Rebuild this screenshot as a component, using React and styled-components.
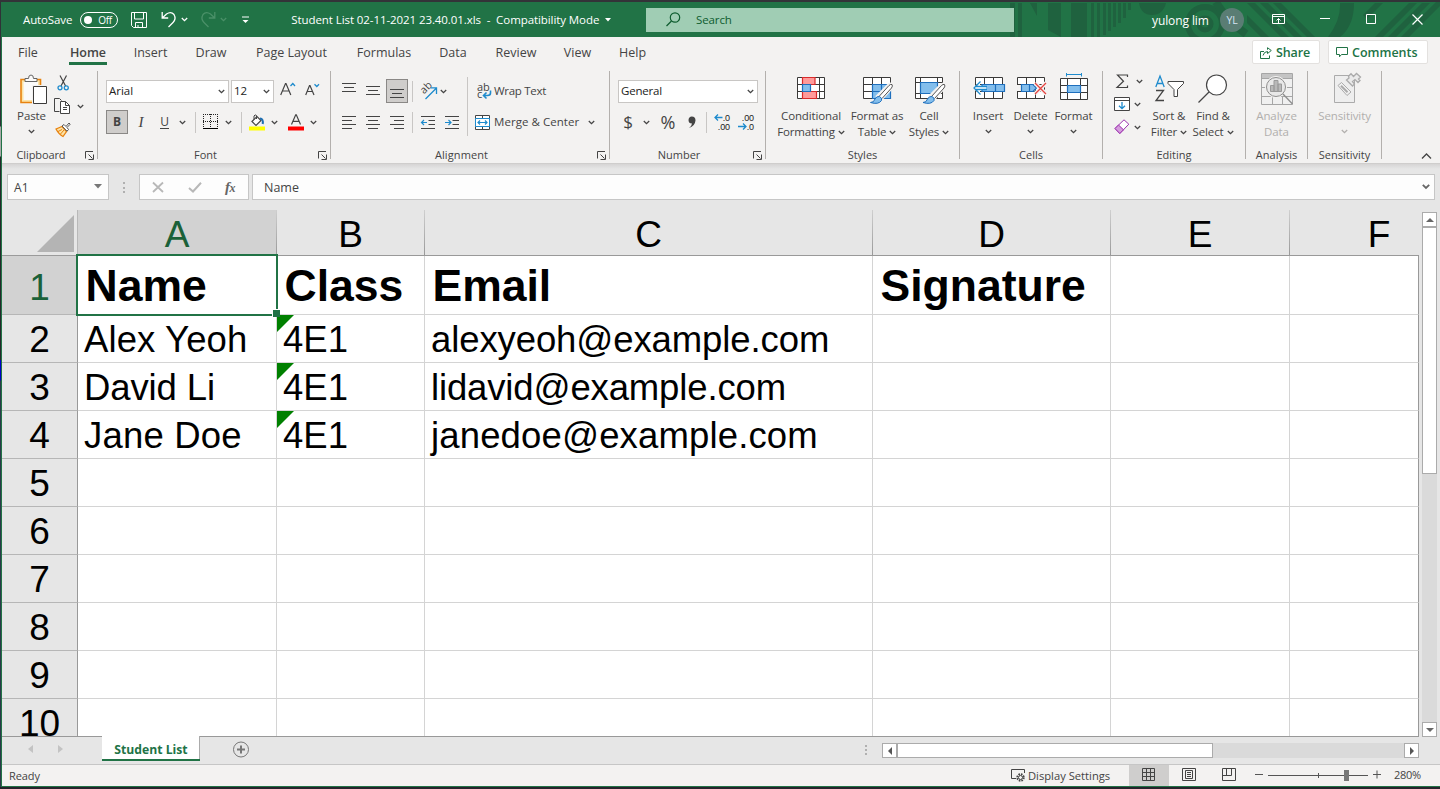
import React from "react";
import styled, { createGlobalStyle } from "styled-components";

const Global = createGlobalStyle`
  * { box-sizing: border-box; }
  body { margin: 0; background: #2b2b2d; font-family: "Open Sans", "Noto Sans", sans-serif; overflow: hidden; }
  svg { display: block; flex: none; overflow: visible; }
`;

const GREEN = "#217346";
const INK = "#444444";
const BLUE = "#1e8bcd";

const Desktop = styled.div`
  width: 1440px;
  height: 789px;
  padding: 2px 0 2px 1px;
  background: linear-gradient(to bottom, #2f3237 0 126px, #a9a9a9 127px 156px, #26282b 157px 360px, #0000c8 360px 380px, #2c3a4a 381px 100%);
  box-shadow: inset 0 2px #333338, inset 0 -2px #24242b;
`;
const Window = styled.div`
  height: 785px;
  border-left: 1px solid ${GREEN};
  border-bottom: 1px solid ${GREEN};
  background: #f3f2f1;
  display: flex;
  flex-direction: column;
`;
const Text = styled.span`
  flex: none;
  white-space: pre;
  font-size: ${(p) => p.$size || 12}px;
  line-height: 16px;
  letter-spacing: ${(p) => p.$track || 0}px;
  font-weight: ${(p) => p.$weight || 400};
  color: ${(p) => p.$color || INK};
  margin-left: ${(p) => p.$ml || 0}px;
  margin-top: ${(p) => p.$mt || 0}px;
`;
const Icon = styled.svg.attrs((p) => ({
  width: p.$w,
  height: p.$h,
  viewBox: `0 0 ${p.$w} ${p.$h}`,
  fill: "none",
  stroke: p.$stroke || INK,
}))`
  margin-left: ${(p) => p.$ml || 0}px;
  margin-top: ${(p) => p.$mt || 0}px;
`;
const Letter = styled.text`
  font-family: "Open Sans", sans-serif;
  font-size: ${(p) => p.$size}px;
  fill: ${(p) => p.$color || INK};
  stroke: none;
`;

const Chevron = ({ ml, mt, color = INK }) => (
  <Icon $w={7} $h={5} $ml={ml} $mt={mt} $stroke={color}>
    <path d="M.8 1 3.5 3.6 6.2 1" strokeWidth="1.3" />
  </Icon>
);

/* ---------- title bar ---------- */
const TitleBar = styled.header`
  position: relative;
  flex: none;
  height: 35px;
  background: ${GREEN};
  display: flex;
  align-items: center;
`;
const TitleArt = styled.svg`
  position: absolute;
  right: 0;
  top: 0;
  overflow: hidden;
`;
const Toggle = styled.div`
  width: 38px;
  height: 16px;
  margin-left: 8px;
  border: 1px solid #fff;
  border-radius: 8px;
  display: flex;
  align-items: center;
  padding-left: 3px;
  flex: none;
`;
const Knob = styled.i`
  width: 8px;
  height: 8px;
  border-radius: 50%;
  background: #fff;
`;
const SearchBox = styled.div`
  width: 368px;
  height: 24px;
  background: #a0cdb4;
  display: flex;
  align-items: center;
  flex: none;
  z-index: 1;
`;
const TitleLeft = styled.div`
  width: 644px;
  display: flex;
  align-items: center;
  padding-left: 21px;
`;
const TitleRight = styled.div`
  flex: 1;
  display: flex;
  align-items: center;
  padding-left: 138px;
  z-index: 1;
`;
const TitleName = styled.div`
  width: 57px;
  display: flex;
`;
const Avatar = styled.div`
  width: 24px;
  height: 24px;
  margin-left: 11px;
  border-radius: 50%;
  background: #5a7d74;
  color: #d5e4f4;
  font-size: 10.5px;
  letter-spacing: -0.2px;
  display: flex;
  align-items: center;
  justify-content: center;
`;

/* ---------- ribbon ---------- */
const TabRow = styled.nav`
  flex: none;
  height: 30px;
  display: flex;
`;
const Tab = styled.div`
  width: ${(p) => p.$w}px;
  margin-left: ${(p) => p.$ml}px;
  height: 28px;
  display: flex;
  justify-content: center;
  padding-top: 8px;
  border-bottom: 3px solid ${(p) => (p.$on ? GREEN : "transparent")};
  flex: none;
`;
const TabButton = styled.div`
  width: ${(p) => p.$w}px;
  height: 24px;
  margin: 3px 0 0 ${(p) => p.$ml}px;
  background: #fff;
  border: 1px solid #e3e1df;
  border-radius: 2px;
  display: flex;
  align-items: center;
  padding: 1px 0 0 7px;
  flex: none;
`;
const TabEnd = styled.i`
  width: 12px;
`;
const Ribbon = styled.section`
  flex: none;
  height: 96px;
  display: flex;
  padding-top: 4px;
`;
const Group = styled.div`
  width: ${(p) => p.$w}px;
  height: 88px;
  flex: none;
  border-right: 1px solid #b3b0ad;
  display: flex;
  flex-direction: column;
`;
const GroupBody = styled.div`
  height: 75px;
  display: flex;
  padding-left: ${(p) => p.$pl || 0}px;
  flex: none;
`;
const GroupFoot = styled.div`
  display: flex;
  height: 16px;
  align-items: center;
  margin-top: 1px;
`;
const GroupName = styled.div`
  flex: 1;
  display: flex;
  justify-content: center;
`;
const LauncherSlot = styled.div`
  width: 12px;
  margin-left: 5px;
`;
const Stack = styled.div`
  display: flex;
  flex-direction: column;
  width: ${(p) => (p.$w ? p.$w + "px" : "auto")};
  align-items: ${(p) => (p.$center ? "center" : "flex-start")};
  margin-left: ${(p) => p.$ml || 0}px;
  flex: none;
`;
const Line = styled.div`
  display: flex;
  align-items: center;
  height: ${(p) => p.$h || 24}px;
  margin-top: ${(p) => p.$mt || 0}px;
  margin-left: ${(p) => p.$ml || 0}px;
`;
const Combo = styled.div`
  width: ${(p) => p.$w}px;
  height: 23px;
  margin-left: ${(p) => p.$ml || 0}px;
  border: 1px solid #c8c6c4;
  background: #fff;
  display: flex;
  align-items: center;
  justify-content: space-between;
  padding: 0 3px 0 2px;
  flex: none;
`;
const Pressed = styled.div`
  width: 22px;
  height: 24px;
  margin-left: ${(p) => p.$ml || 0}px;
  background: #cfcdcb;
  border: 1px solid #8a8886;
  display: flex;
  align-items: center;
  justify-content: center;
  flex: none;
`;
const Divider = styled.i`
  width: 1px;
  height: ${(p) => p.$h || 21}px;
  background: #c8c6c4;
  margin-left: ${(p) => p.$ml || 0}px;
  margin-top: ${(p) => p.$mt || 0}px;
  flex: none;
`;
const IconSlot = styled.div`
  height: 37px;
  padding: ${(p) => p.$top || 0}px 0 0 ${(p) => p.$left || 0}px;
  display: flex;
  align-items: flex-start;
  flex: none;
`;
const Caption = styled.div`
  display: flex;
  align-items: center;
  height: 16px;
  gap: 3px;
`;
const ItalicI = styled.span`
  width: 12px;
  margin-left: 7px;
  text-align: center;
  font: italic 15px/16px "Liberation Serif", serif;
  color: ${INK};
`;
const Underlined = styled.span`
  width: 9px;
  margin-left: 13px;
  text-align: center;
  font-size: 12px;
  line-height: 13px;
  color: ${INK};
  border-bottom: 1px solid ${INK};
`;
const Glyph = styled.span`
  width: ${(p) => p.$w}px;
  margin-left: ${(p) => p.$ml || 0}px;
  font-size: ${(p) => p.$size}px;
  line-height: 20px;
  text-align: center;
  color: ${INK};
`;

const Launcher = () => (
  <Icon $w={9} $h={9}>
    <path d="M.5 7.5V.5H8M3.5 3.5 7.5 7.5M8.5 3.5V8.5H3.5" />
  </Icon>
);
const RibbonGroup = ({ name, w, pl, launcher, track = 0, children }) => (
  <Group $w={w}>
    <GroupBody $pl={pl}>{children}</GroupBody>
    <GroupFoot>
      <GroupName>
        <Text $size={11} $track={track}>{name}</Text>
      </GroupName>
      {launcher && <LauncherSlot><Launcher /></LauncherSlot>}
    </GroupFoot>
  </Group>
);
const BigButton = ({ w, ml, top, left, icon, lines, track = -0.1, chevron, color }) => (
  <Stack $w={w} $ml={ml} $center>
    <IconSlot $top={top} $left={left}>{icon}</IconSlot>
    {lines.map((l, i) => (
      <Caption key={l}>
        <Text $size={11.5} $track={track} $color={color}>{l}</Text>
        {chevron === "inline" && i === lines.length - 1 && <Chevron />}
      </Caption>
    ))}
    {chevron === "below" && <Chevron mt={5} color={color} />}
  </Stack>
);

const Lines = ({ rows, ml, mt }) => (
  <Icon $w={14} $h={13} $ml={ml} $mt={mt}>
    {rows.map(([a, b, y], i) => (
      <path key={i} d={`M${a} ${y}.5H${b}`} />
    ))}
  </Icon>
);

const PasteIcon = () => (
  <Icon $w={28} $h={31}>
    <path d="M1 5.5H20.5V28.5H1Z" fill="#fce3a6" stroke="#e8820e" strokeWidth="1.6" />
    <path d="M3.5 8H18V26H3.5Z" fill="#fafafa" stroke="none" />
    <path d="M5 7.5V4.5H8.5Q8.5 1 11 1T13.5 4.5H17V7.5Z" fill="#fafafa" stroke="#666" />
    <path d="M12 11H28V31H12Z" fill="#f3f2f1" stroke="none" />
    <path d="M13.5 12.5H26.5V29.5H13.5Z" fill="#fff" stroke="#3b3a39" />
  </Icon>
);
const CutIcon = () => (
  <Icon $w={13} $h={16} $ml={3}>
    <path d="M3 .5 8.6 11M9.5 .5 4 11" strokeWidth="1.2" />
    <circle cx="3" cy="12.8" r="2" stroke={BLUE} strokeWidth="1.3" />
    <circle cx="9.3" cy="12.8" r="2" stroke={BLUE} strokeWidth="1.3" />
  </Icon>
);
const CopyIcon = () => (
  <Icon $w={17} $h={17} $ml={0} $mt={-1}>
    <path d="M5.5 13.5H.5V.5H5.5L7.5 2.5" />
    <path d="M6.5 3.5H11.5L15.5 7.5V15.5H6.5Z" fill="#fff" />
    <path d="M11.5 3.5V7.5H15.5M9 9.5H13M9 11.5H13" />
  </Icon>
);
const PainterIcon = () => (
  <Icon $w={16} $h={16} $ml={1} $mt={-3}>
    <path d="M1 7 7 4.5 11.5 9.5 8 14.5Q4 12.5 1 7Z" fill="#fce3a6" stroke="#e8820e" strokeWidth="1.3" />
    <path d="M3 9.5 7 7.5M5.5 12 9 8" stroke="#e8820e" />
    <path d="M7 4 9 2.5 11 4.5 14 1 15.2 2.2 12 5.5 13.5 7.5 12 9.2Z" fill="#fff" stroke="#555" />
  </Icon>
);
const BorderIcon = ({ ml }) => (
  <Icon $w={16} $h={16} $ml={ml}>
    <path d="M0 .5H15M0 7.5H15M.5 0V13M7.5 0V13M14.5 0V13" stroke="#222" strokeDasharray="1 1" shapeRendering="crispEdges" />
    <path d="M0 14.5H15" stroke="#000" />
  </Icon>
);
const FillIcon = ({ ml }) => (
  <Icon $w={16} $h={17} $ml={ml}>
    <path d="M3 7.5 8 2.5 12 6.5 7 11.5Z" fill="#fff" strokeWidth="1.2" />
    <path d="M5 5.5V2Q6 0 7.5 1.5V5" />
    <path d="M11 4.5Q14.5 4.5 13.7 10" stroke="#1f6fb2" strokeWidth="2" />
    <path d="M0 14.5H16" stroke="#ffff00" strokeWidth="4" />
  </Icon>
);
const FontColorIcon = ({ ml }) => (
  <Icon $w={16} $h={17} $ml={ml}>
    <path d="M3.5 10.5 7.7 .8H8.3L12.5 10.5M5 7.3H11" strokeWidth="1.2" />
    <path d="M0 14.5H16" stroke="#ff0000" strokeWidth="4" />
  </Icon>
);
const OrientIcon = ({ ml }) => (
  <Icon $w={18} $h={17} $ml={ml}>
    <Letter $size={10.5} x="0" y="0" transform="translate(4 11.5) rotate(-45)">ab</Letter>
    <path d="M5.5 16 16 5.5M10.5 4.8H16.5V11" stroke={BLUE} strokeWidth="1.3" />
  </Icon>
);
const WrapIcon = () => (
  <Icon $w={15} $h={17}>
    <Letter $size={11} x="0" y="8.3">ab</Letter>
    <Letter $size={11} x="0" y="15.3">c</Letter>
    <path d="M13.5 7.5V10Q13.5 12.5 10.5 12.5H6.5M9.5 9.5 6.5 12.5 9.5 15.5" stroke={BLUE} strokeWidth="1.6" />
  </Icon>
);
const MergeIcon = () => (
  <Icon $w={16} $h={15}>
    <path d="M.5 .5H14.5V14.5H.5ZM.5 3.5H14.5M.5 11.5H14.5M7.5 .5V3.5M7.5 11.5V14.5" fill="#fff" />
    <path d="M.5 3.5H14.5V11.5H.5Z" fill="#fff" stroke={BLUE} />
    <path d="M3 7.5H12M5 5.5 3 7.5 5 9.5M10 5.5 12 7.5 10 9.5" stroke={BLUE} strokeWidth="1.2" />
  </Icon>
);
const IndentIcon = ({ ml, right }) => (
  <Icon $w={15} $h={13} $ml={ml}>
    <path d="M0 .5H14M7.5 4.5H14M7.5 8.5H14M0 12.5H14" />
    <path d={right ? "M0 6.5H5.5M3.5 4 6 6.5 3.5 9" : "M1 6.5H6M3 4 .5 6.5 3 9"} stroke={BLUE} strokeWidth="1.2" />
  </Icon>
);
const DecimalBox = styled.div`
  width: 16px;
  height: 17px;
  margin-left: ${(p) => p.$ml}px;
  display: flex;
  flex-direction: column;
  justify-content: space-between;
  flex: none;
  font: 9px/8px "Liberation Sans", sans-serif;
  letter-spacing: -0.1px;
  color: #222;
`;
const DecimalRow = styled.div`
  display: flex;
  justify-content: flex-end;
  align-items: center;
  height: 8px;
`;
const DecArrow = ({ right }) => (
  <Icon $w={9} $h={7}>
    <path d={right ? "M0 3.5H8M5 .5 8 3.5 5 6.5" : "M8.5 3.5H1M4 .5 1 3.5 4 6.5"} stroke={BLUE} strokeWidth="1.3" />
  </Icon>
);

const CondIcon = () => (
  <Icon $w={28} $h={23}>
    <path d="M.5 .5H27.5V21.5H.5ZM.5 7.5H27.5M.5 14.5H27.5M5.5 .5V21.5M22.5 .5V21.5" fill="#fff" stroke="#3b3a39" />
    <path d="M5.5 .5H18V7.5H5.5ZM5.5 14.5H19.5V21.5H5.5Z" fill="#ff9a9a" stroke="#d92b2b" strokeWidth="1.2" />
    <path d="M5.5 7.5H13.5V14.5H5.5Z" fill="#83beec" stroke="#1e6fbd" strokeWidth="1.2" />
  </Icon>
);
const Brush = ({ x }) => (
  <g transform={`translate(${x} 6)`}>
    <path d="M7 13 18.5 1.5Q20.5 .5 21.8 1.5 22.5 3 21 5L11 16Z" fill="#fff" stroke="#f3f2f1" strokeWidth="3" />
    <path d="M8.5 13.5 18.5 2.5Q20 1 21.5 1.5 22.5 3 21 5L11.5 15.5" fill="#fff" stroke="#555" />
    <path d="M0 19.5Q3.5 19.5 4.5 16 6 13 9 13.5 12 15 11 17.5 8 22 0 19.5Z" fill="#83beec" stroke="#1e6fbd" />
  </g>
);
const TableIcon = () => (
  <Icon $w={30} $h={29}>
    <path d="M.5 .5H27.5V21.5H.5ZM.5 7.5H27.5M.5 14.5H27.5M9.5 .5V21.5M18.5 .5V21.5" fill="#fff" stroke="#3b3a39" />
    <path d="M9.5 7.5H27.5V21.5H9.5ZM9.5 14.5H27.5M18.5 7.5V21.5" fill="#83beec" stroke="#1e6fbd" strokeWidth="1.2" />
    <Brush x={7.5} />
  </Icon>
);
const StylesIcon = () => (
  <Icon $w={31} $h={29}>
    <path d="M.5 .5H27.5V21.5H.5ZM.5 5.5H27.5M.5 16.5H27.5M5.5 .5V21.5M22.5 .5V21.5" fill="#fff" stroke="#3b3a39" />
    <path d="M5.5 5.5H22.5V16.5H5.5Z" fill="#83beec" stroke="#1e6fbd" strokeWidth="1.2" />
    <Brush x={8} />
  </Icon>
);
const InsertIcon = () => (
  <Icon $w={33} $h={23}>
    <path d="M2.5 .5H29.5V21.5H2.5ZM2.5 7.5H29.5M2.5 14.5H29.5M11.5 .5V21.5M20.5 .5V21.5" fill="#fff" stroke="#3b3a39" />
    <path d="M9 7.5H31.5V14.5H9ZM22.5 7.5V14.5" fill="#83beec" stroke="#1e6fbd" strokeWidth="1.2" />
    <path d="M0 11 7 4V9.5H13V12.5H7V18Z" fill="#fff" stroke="none" />
    <path d="M7.5 4.5 1 11 7.5 17.5M3 9.5H14M3 12.5H14" stroke={BLUE} strokeWidth="1.3" />
  </Icon>
);
const DeleteIcon = () => (
  <Icon $w={30} $h={23}>
    <path d="M.5 .5H27.5V21.5H.5ZM.5 7.5H27.5M.5 14.5H27.5M9.5 .5V21.5M18.5 .5V21.5" fill="#fff" stroke="#3b3a39" />
    <path d="M0 8H4V14H0Z" fill="#f3f2f1" stroke="none" />
    <path d="M4.5 7.5H16L19.5 11 16 14.5H4.5ZM12.5 7.5V14.5" fill="#83beec" stroke="#1e6fbd" strokeWidth="1.2" />
    <path d="M18 6 29 17M29 6 18 17" stroke="#f3f2f1" strokeWidth="4" />
    <path d="M18 6 29 17M29 6 18 17" stroke="#e8433f" strokeWidth="1.3" />
  </Icon>
);
const FormatIcon = () => (
  <Icon $w={28} $h={28}>
    <path d="M6.5 1.5H21.5M6.5 0V3.5M21.5 0V3.5" stroke={BLUE} />
    <path d="M.5 5.5H27.5V26.5H.5ZM.5 12.5H27.5M.5 19.5H27.5M7.5 5.5V26.5M20.5 5.5V26.5" fill="#fff" stroke="#3b3a39" />
    <path d="M7.5 12.5H20.5V19.5H7.5Z" fill="#83beec" stroke="#1e6fbd" strokeWidth="1.2" />
  </Icon>
);
const SigmaIcon = () => (
  <Icon $w={13} $h={15}>
    <path d="M11.5 3V1H1.5L7.5 7.3 1 13.5H11.5V11.5" strokeWidth="1.2" />
  </Icon>
);
const FillDownIcon = () => (
  <Icon $w={16} $h={15}>
    <path d="M.5 .5H15.5V13.5H.5ZM.5 3.5H15.5" fill="#fff" />
    <path d="M8 5V11.5M5 8.8 8 11.7 11 8.8" stroke={BLUE} strokeWidth="1.3" />
  </Icon>
);
const EraserIcon = () => (
  <Icon $w={16} $h={16} $stroke="#9b2fae">
    <path d="M1 9.5 10 .8 14.8 5.2 5.8 14.5Z" fill="#fff" />
    <path d="M1 9.5 4.5 6 9.5 10.8 5.8 14.5Z" fill="#d59ddd" />
  </Icon>
);
const SortIcon = () => (
  <Icon $w={29} $h={29}>
    <path d="M.8 12 5 1 9.2 12M2.2 8.5H7.8" stroke={BLUE} strokeWidth="1.3" />
    <path d="M1 15.5H8.5L1 25.5H9" strokeWidth="1.3" />
    <path d="M13 6.5H28.5V8.5L22.5 14.5V21.5H19V14.5L13 8.5Z" fill="#fff" />
  </Icon>
);
const FindIcon = () => (
  <Icon $w={30} $h={31}>
    <circle cx="18.5" cy="11" r="10" fill="#fff" strokeWidth="1.2" />
    <path d="M11 18 .5 28.5" strokeWidth="1.3" />
  </Icon>
);
const AnalyzeIcon = () => (
  <Icon $w={32} $h={33} $stroke="#a6a6a6">
    <path d="M.5 .5H31.5V31.5H.5Z" fill="#f0f0f0" />
    <path d="M1 1H31V5H1Z" fill="#c4c4c4" stroke="none" />
    <path d="M.5 5.5H31.5M.5 14.5H31.5M.5 23.5H31.5M11.5 23V31M21.5 23V31" />
    <circle cx="15" cy="14" r="10.5" fill="#f3f2f1" stroke="#f3f2f1" />
    <circle cx="15" cy="14" r="9.5" fill="#e8e8e8" stroke="#8e8e8e" />
    <path d="M22 21 31.5 31" stroke="#8e8e8e" strokeWidth="1.3" />
    <path d="M9.5 12.5H13V18.5H9.5ZM17 11H20.5V18.5H17ZM13 7.5H17V18.5H13Z" fill="#b8b8b8" stroke="#9a9a9a" />
  </Icon>
);
const SensIcon = () => (
  <Icon $w={28} $h={31} $stroke="#ababab">
    <path d="M.5 2.5H20.5V29.5H.5Z" fill="#eeeeee" />
    <path d="M4 12.5 7.5 9.5 17 19 13 22.5Z" fill="#f0f0f0" />
    <path d="M7 12.8 13.5 19.3" strokeWidth="2" />
    <path d="M12.5 7 18.5 13 20.5 11 18.5 8.5 21 6.5 24 9.5 26 7.5 24.5 6 26.5 4 22.5 .5 19.5 3.5 17 .8 14.5 3.2 15 5Z" fill="#eaeaea" strokeWidth="1.3" />
  </Icon>
);

/* ---------- formula bar ---------- */
const FormulaBar = styled.section`
  flex: none;
  height: 47px;
  background: linear-gradient(#c8c6c4 0, #d6d5d5 1px, #e6e6e6 6px);
  display: flex;
  padding: 11px 0 0 5px;
`;
const Field = styled.div`
  height: 26px;
  width: ${(p) => p.$w}px;
  margin-left: ${(p) => p.$ml || 0}px;
  background: #fdfdfd;
  border: 1px solid #c6c6c6;
  display: flex;
  align-items: center;
  flex: none;
`;
const Spring = styled.i`
  flex: 1;
`;
const Dots = styled.div`
  width: 2px;
  height: ${(p) => p.$h || 11}px;
  margin: ${(p) => p.$m};
  display: flex;
  flex-direction: column;
  justify-content: space-between;
  flex: none;
  i { height: 2px; background: #b0b0b0; }
`;
const Fx = styled.span`
  font: italic 700 15px/16px "Liberation Serif", serif;
  color: #666;
  margin-left: 23px;
  letter-spacing: -0.5px;
  small { font-size: 12px; }
`;

/* ---------- sheet ---------- */
const SheetArea = styled.main`
  flex: none;
  height: 526px;
  background: #e6e6e6;
  display: flex;
`;
const Grid = styled.div`
  position: relative;
  width: 1417px;
  height: 526px;
  overflow: hidden;
  display: grid;
  grid-template-columns: 76px 199px 148px 448px 238px 179px 129px;
  grid-template-rows: 46px 59px repeat(9, 48px);
  font-family: "Liberation Sans", Arial, sans-serif;
  font-size: 37px;
  flex: none;
`;
const Corner = styled.div`
  display: flex;
  padding: 5px 3px 0 34px;
  border-bottom: 1px solid #9b9b9b;
  border-right: 1px solid #b8b8b8;
`;
const ColHead = styled.div`
  display: flex;
  justify-content: ${(p) => (p.$last ? "flex-start" : "center")};
  padding: 4px 1px 0 0;
  line-height: 41px;
  overflow: hidden;
  color: ${(p) => (p.$on ? "#1b6139" : "#000")};
  border-bottom: 1px solid #999;
  background: ${(p) => (p.$last ? "" : "linear-gradient(#cfcfcf, #999) right / 1px 100% no-repeat,")} ${(p) => (p.$on ? "#d2d2d2" : "#e6e6e6")};
  span { flex: none; width: ${(p) => (p.$last ? "178px" : "auto")}; text-align: center; }
`;
const RowHead = styled.div`
  display: flex;
  justify-content: center;
  align-items: flex-end;
  padding: 0 0 ${(p) => (p.$on ? 5 : 1)}px 0;
  line-height: 42px;
  color: ${(p) => (p.$on ? "#1b6139" : "#000")};
  border-right: 1px solid #999;
  border-bottom: 1px solid #b6b6b6;
  background: ${(p) => (p.$on ? "#d2d2d2" : "#e6e6e6")};
`;
const Cell = styled.div`
  position: relative;
  background: #fff;
  border-right: 1px solid ${(p) => (p.$last ? "#999" : "#d4d4d4")};
  border-bottom: 1px solid #d4d4d4;
  display: flex;
  align-items: flex-end;
  white-space: pre;
  color: #000;
  padding: 0 0 ${(p) => (p.$bold ? 3 : 1)}px ${(p) => (p.$bold ? 7.5 : 6)}px;
  font-size: ${(p) => (p.$bold ? 44.5 : 36.5)}px;
  line-height: ${(p) => (p.$bold ? 50 : 42)}px;
  font-weight: ${(p) => (p.$bold ? 700 : 400)};
  letter-spacing: ${(p) => p.$track || 0}px;
`;
const ErrorFlag = styled.i`
  position: absolute;
  left: 0;
  top: 0;
  border-top: 17px solid #008000;
  border-right: 17px solid transparent;
`;
const Selection = styled.div`
  position: absolute;
  left: 74px;
  top: 44px;
  width: 202px;
  height: 62px;
  border: 2px solid ${GREEN};
  &::after {
    content: "";
    position: absolute;
    right: -4px;
    bottom: -3px;
    width: 7px;
    height: 7px;
    background: ${GREEN};
    border: solid #fff;
    border-width: 1px 0 0 1px;
  }
`;
const VScroll = styled.div`
  position: relative;
  z-index: 1;
  width: 15px;
  height: 525px;
  margin: 2px 0 0 3px;
  background: #dadada;
  display: flex;
  flex-direction: column;
  justify-content: space-between;
`;
const ScrollPiece = styled.div`
  width: ${(p) => p.$w || 15}px;
  height: ${(p) => p.$h || 15}px;
  background: #fff;
  border: 1px solid #ababab;
  display: flex;
  align-items: center;
  justify-content: center;
  flex: none;
`;

/* ---------- sheet tabs and status ---------- */
const TabsBar = styled.section`
  flex: none;
  height: 28px;
  background: #e6e6e6;
  display: flex;
`;
const TopLine = styled.div`
  border-top: 1px solid #999;
  width: ${(p) => p.$w}px;
  display: flex;
  flex: none;
`;
const SheetTab = styled.div`
  width: 98px;
  height: 25px;
  background: #fff;
  border-bottom: 2px solid ${GREEN};
  box-shadow: inset -1px 0 #ababab;
  display: flex;
  justify-content: center;
  align-items: center;
  padding-top: 4px;
  flex: none;
`;
const HScroll = styled.div`
  width: 537px;
  height: 15px;
  margin: 6px 0 0 15px;
  background: #dadada;
  display: flex;
`;
const StatusBar = styled.footer`
  flex: none;
  height: 22px;
  border-top: 1px solid #c6c6c6;
  background: #f3f2f1;
  display: flex;
  align-items: center;
`;
const StatusLabel = styled.div`
  width: 103px;
  padding-left: 2px;
  display: flex;
`;
const ZoomLabel = styled.div`
  width: 54px;
  display: flex;
  padding-left: 8px;
`;
const ViewButton = styled.div`
  width: 40px;
  height: 21px;
  display: flex;
  align-items: center;
  justify-content: center;
  padding: 0 1px 2px 0;
  background: ${(p) => (p.$on ? "#cfcecd" : "transparent")};
`;

const TABS = [
  ["File", 18, 17], ["Home", 38, 32], ["Insert", 33, 27], ["Draw", 30, 29],
  ["Page Layout", 72, 29.5], ["Formulas", 54, 29.5], ["Data", 28, 28],
  ["Review", 41, 28.5], ["View", 28, 27], ["Help", 27, 27.5],
];

const COLS = ["A", "B", "C", "D", "E", "F"];
const DATA = [
  ["Name", "Class", "Email", "Signature"],
  ["Alex Yeoh", "4E1", "alexyeoh@example.com"],
  ["David Li", "4E1", "lidavid@example.com"],
  ["Jane Doe", "4E1", "janedoe@example.com"],
];
const TRACKING = {
  "Alex Yeoh": 0.12,
  "David Li": -0.12,
  "Jane Doe": 0.2,
  "alexyeoh@example.com": -0.1,
  "lidavid@example.com": -0.14,
  "janedoe@example.com": 0.15,
};

const Title = () => (
  <TitleBar>
    <TitleArt width="430" height="35" viewBox="0 0 430 35">
      <g fill="#1f623f">
        <path d="M0 1H5V35H0ZM8 1H12V35H8ZM20 1H27V14ZM38 1H51V35L38 28ZM61 1H77V35H61ZM81 1H84V35H81ZM87 1H90V35H87ZM93 1H96V33H93ZM98 1H101V29H98ZM103 1H106V25H103ZM108 1H111V21H108ZM113 1H116V16H113ZM118 1H121V8H118Z" />
        <path d="M129 1H156Q153 13 142 13T129 1ZM330 1H344Q344 24 330 35H318Q331 18 330 1Z" />
        <path d="M237 1H245L279 35H271ZM250 1H258L292 35H284ZM263 1H271L305 35H297ZM237 13 259 35H251L237 21ZM378 35H386L420 1H412ZM391 35H399L430 4V0H426ZM365 35H373L407 1H399ZM357 17 373 1H365L353 13Z" />
      </g>
      <g fill="none" stroke="#1f623f">
        <circle cx="195" cy="22" r="17" strokeWidth="6" />
        <circle cx="195" cy="22" r="6" strokeWidth="5" />
        <path d="M206 0Q216 18 236 32" strokeWidth="8" />
      </g>
    </TitleArt>
    <TitleLeft>
      <Text $color="#fff" $size={11.5} $track={-0.12}>AutoSave</Text>
      <Toggle>
        <Knob />
        <Text $color="#fff" $size={10} $track={-0.3} $ml={6}>Off</Text>
      </Toggle>
      <Icon $w={17} $h={17} $ml={13} $mt={2} $stroke="#fff">
        <path d="M.5 .5H15.5V15.5H2.5L.5 13.5ZM3.5 .5V7H12.5V.5M4.5 15.5V10.5H11.5V15.5M7 15.5V13" />
      </Icon>
      <Icon $w={15} $h={17} $ml={13} $stroke="#fff">
        <path d="M1.2 1V7H7.2M1.5 6.8 5.5 3Q10 0 13 3.5 15.5 8 12 11.5L7.5 16" strokeWidth="1.3" />
      </Icon>
      <Chevron ml={5} color="#fff" />
      <Icon $w={15} $h={17} $ml={13} $stroke="#4a9068">
        <path d="M13.8 1V7H7.8M13.5 6.8 9.5 3Q5 0 2 3.5 -.5 8 3 11.5L7.5 16" strokeWidth="1.3" />
      </Icon>
      <Chevron ml={4} color="#4a9068" />
      <Icon $w={7} $h={8} $ml={15} $mt={1} $stroke="#fff">
        <path d="M0 1H7" /><path d="M.5 4H6.5L3.5 7Z" fill="#fff" stroke="none" />
      </Icon>
      <Text $color="#fff" $size={11.5} $track={-0.08} $ml={42}>{"Student List 02-11-2021 23.40.01.xls  -  Compatibility Mode"}</Text>
      <Icon $w={6} $h={4} $ml={6} $mt={1}><path d="M0 0H6L3 3.5Z" fill="#fff" stroke="none" /></Icon>
    </TitleLeft>
    <SearchBox>
      <Icon $w={15} $h={15} $ml={20} $stroke="#0e5c2f">
        <circle cx="9" cy="5.5" r="4.7" strokeWidth="1.2" /><path d="M5.5 9 .5 14" strokeWidth="1.2" />
      </Icon>
      <Text $color="#0e5c2f" $size={11.5} $track={-0.1} $ml={15}>Search</Text>
    </SearchBox>
    <TitleRight>
      <TitleName><Text $color="#fff" $size={12} $mt={2} $track={-0.1}>yulong lim</Text></TitleName>
      <Avatar>YL</Avatar>
      <Icon $w={13} $h={10} $ml={28} $mt={-1} $stroke="#fff"><path d="M.5 .5H12.5V9.5H.5ZM.5 2.5H12.5M6.5 9V4.5M4.5 6.5 6.5 4.5 8.5 6.5" /></Icon>
      <Icon $w={10} $h={1} $ml={35} $mt={-2} $stroke="#fff"><path d="M0 .5H10" /></Icon>
      <Icon $w={10} $h={10} $ml={36} $mt={-1} $stroke="#fff"><path d="M.5 .5H9.5V9.5H.5Z" /></Icon>
      <Icon $w={11} $h={11} $ml={36} $mt={-1} $stroke="#fff"><path d="M.5 .5 10.5 10.5M10.5 .5 .5 10.5" strokeWidth="1.2" /></Icon>
    </TitleRight>
  </TitleBar>
);

const Tabs = () => (
  <TabRow>
    {TABS.map(([name, w, ml]) => (
      <Tab key={name} $w={w} $ml={ml} $on={name === "Home"}>
        <Text $size={12.5} $weight={name === "Home" ? 600 : 400}>{name}</Text>
      </Tab>
    ))}
    <Spring />
    <TabButton $w={68} $ml={0}>
      <Icon $w={12} $h={12} $stroke={GREEN}>
        <path d="M4 4.5H.5V11.5H9.5V8.5M3 8.5Q4 4.5 7.5 4.5V6.5L11.3 3.5 7.5 .7V2.7" />
      </Icon>
      <Text $color={GREEN} $weight={600} $size={12.5} $track={-0.1} $ml={4}>Share</Text>
    </TabButton>
    <TabButton $w={100} $ml={8}>
      <Icon $w={12} $h={12} $mt={-1} $stroke={GREEN}><path d="M.5 1.5H11.5V8.5H5.5L3.5 10.8V8.5H.5Z" /></Icon>
      <Text $color={GREEN} $weight={600} $size={12.5} $ml={4}>Comments</Text>
    </TabButton>
    <TabEnd />
  </TabRow>
);

const RibbonBar = () => (
  <Ribbon>
    <RibbonGroup name="Clipboard" w={96} pl={14} track={-0.1} launcher>
      <BigButton w={31} top={3} left={4} icon={<PasteIcon />} lines={["Paste"]} chevron="below" />
      <Stack $ml={7}>
        <Line $h={24}><CutIcon /></Line>
        <Line $h={22} $mt={1}><CopyIcon /><Chevron ml={6} mt={-1} /></Line>
        <Line $h={24} $mt={1}><PainterIcon /></Line>
      </Stack>
    </RibbonGroup>

    <RibbonGroup name="Font" w={233} pl={8} launcher>
      <Stack>
        <Line $mt={8}>
          <Combo $w={123}><Text $size={11.5} $color="#222">Arial</Text><Chevron /></Combo>
          <Combo $w={43} $ml={2}><Text $size={11.5} $color="#222" $track={-0.2}>12</Text><Chevron /></Combo>
          <Icon $w={16} $h={14} $ml={6} $mt={-4}>
            <path d="M.7 13 5.5 1.5H6L10.8 13M2.5 9H9" strokeWidth="1.2" />
            <path d="M10.5 4 12.8 1.5 15 4" stroke={BLUE} strokeWidth="1.3" />
          </Icon>
          <Icon $w={15} $h={13} $ml={9} $mt={-3}>
            <path d="M.7 12 4.5 2.5H5L9 12M2.2 8.5H7.5" strokeWidth="1.2" />
            <path d="M9.5 1.2 11.8 3.5 14 1.2" stroke={BLUE} strokeWidth="1.3" />
          </Icon>
        </Line>
        <Line $mt={7}>
          <Pressed><Text $weight={700} $size={12} $mt={-1}>B</Text></Pressed>
          <ItalicI>I</ItalicI>
          <Underlined>U</Underlined>
          <Chevron ml={10} />
          <Divider $ml={9} />
          <BorderIcon ml={7} />
          <Chevron ml={6} />
          <Divider $ml={9} />
          <FillIcon ml={7} />
          <Chevron ml={6} />
          <FontColorIcon ml={10} />
          <Chevron ml={6} />
        </Line>
      </Stack>
    </RibbonGroup>

    <RibbonGroup name="Alignment" w={279} pl={11} launcher track={0.1}>
      <Stack $w={125}>
        <Line $mt={8}>
          <Lines mt={-5} rows={[[0, 14, 1], [2, 12, 5], [0, 14, 9]]} />
          <Lines ml={10} rows={[[0, 14, 1], [2, 12, 5], [0, 14, 9]]} mt={0} />
          <Pressed $ml={6}><Lines mt={8} rows={[[0, 14, 0], [2, 12, 4], [0, 14, 8]]} /></Pressed>
          <Divider $ml={4} />
          <OrientIcon ml={7} />
          <Chevron ml={2} />
        </Line>
        <Line $mt={7}>
          <Lines rows={[[0, 14, 0], [0, 10, 4], [0, 14, 8], [0, 10, 12]]} />
          <Lines ml={10} rows={[[0, 14, 0], [2, 12, 4], [0, 14, 8], [2, 12, 12]]} />
          <Lines ml={10} rows={[[0, 14, 0], [4, 14, 4], [0, 14, 8], [4, 14, 12]]} />
          <Divider $ml={8} />
          <IndentIcon ml={8} />
          <IndentIcon ml={9} right />
        </Line>
      </Stack>
      <Divider $h={59} $mt={6} />
      <Stack $ml={9}>
        <Line $mt={8}><WrapIcon /><Text $ml={2} $size={11.5} $track={-0.3}>Wrap Text</Text></Line>
        <Line $mt={7} $ml={-2}><MergeIcon /><Text $ml={3} $size={11.5} $track={0.05}>{"Merge & Center"}</Text><Chevron ml={9} /></Line>
      </Stack>
    </RibbonGroup>

    <RibbonGroup name="Number" w={156} pl={8} track={0} launcher>
      <Stack>
        <Line $mt={8}><Combo $w={140}><Text $size={11.5} $color="#222" $track={-0.2}>General</Text><Chevron /></Combo></Line>
        <Line $mt={7}>
          <Glyph $w={20} $size={17}>$</Glyph>
          <Chevron ml={5} />
          <Glyph $w={18} $ml={9} $size={18}>%</Glyph>
          <Icon $w={8} $h={13} $ml={11}><path d="M3.8 .5Q7.5 .5 7.5 4.5 7 10 1 12 4 9.5 4 7.5 .5 7.5 .5 4 .8 .7 3.8 .5Z" fill={INK} stroke="none" /></Icon>
          <Divider $ml={10} />
          <DecimalBox $ml={7}>
            <DecimalRow><DecArrow /><span>.0</span></DecimalRow>
            <DecimalRow>.00</DecimalRow>
          </DecimalBox>
          <DecimalBox $ml={8}>
            <DecimalRow>.00</DecimalRow>
            <DecimalRow><DecArrow right /><span>.0</span></DecimalRow>
          </DecimalBox>
        </Line>
      </Stack>
    </RibbonGroup>

    <RibbonGroup name="Styles" w={194} pl={10}>
      <BigButton w={70} top={6} icon={<CondIcon />} lines={["Conditional", "Formatting"]} chevron="inline" track={-0.15} />
      <BigButton w={54} ml={4} top={6} left={1} icon={<TableIcon />} lines={["Format as", "Table"]} chevron="inline" />
      <BigButton w={42} ml={4} top={6} left={3} icon={<StylesIcon />} lines={["Cell", "Styles"]} chevron="inline" />
    </RibbonGroup>

    <RibbonGroup name="Cells" w={143} pl={7}>
      <BigButton w={42} top={6} left={2} icon={<InsertIcon />} lines={["Insert"]} chevron="below" />
      <BigButton w={43} top={6} left={3} icon={<DeleteIcon />} lines={["Delete"]} chevron="below" />
      <BigButton w={43} top={2} icon={<FormatIcon />} lines={["Format"]} chevron="below" />
    </RibbonGroup>

    <RibbonGroup name="Editing" w={143} pl={11}>
      <Stack $w={32}>
        <Line $h={20} $ml={2}><SigmaIcon /><Chevron ml={7} /></Line>
        <Line $h={20} $mt={3}><FillDownIcon /><Chevron ml={4} /></Line>
        <Line $h={20} $mt={3}><EraserIcon /><Chevron ml={4} /></Line>
      </Stack>
      <BigButton w={44} ml={1} top={4} icon={<SortIcon />} lines={["Sort &", "Filter"]} chevron="inline" />
      <BigButton w={44} ml={0} top={3} icon={<FindIcon />} lines={["Find &", "Select"]} chevron="inline" />
    </RibbonGroup>

    <RibbonGroup name="Analysis" w={62} pl={8}>
      <BigButton w={45} color="#b1afad" top={2} icon={<AnalyzeIcon />} lines={["Analyze", "Data"]} />
    </RibbonGroup>
    <RibbonGroup name="Sensitivity" w={74} pl={5}>
      <BigButton w={63} color="#b1afad" top={2} left={6} icon={<SensIcon />} lines={["Sensitivity"]} chevron="below" />
    </RibbonGroup>
    <Icon $w={11} $h={7} $ml={39} $mt={82}><path d="M1 5.5 5.5 1 10 5.5" strokeWidth="1.3" /></Icon>
  </Ribbon>
);

const Formula = () => (
  <FormulaBar>
    <Field $w={102}>
      <Text $size={12} $track={0.2} $ml={6} $mt={1}>A1</Text>
      <Spring />
      <Icon $w={14} $h={5} $mt={-2}><path d="M0 0H8L4 4.5Z" fill="#777" stroke="none" /></Icon>
    </Field>
    <Dots $m="8px 14px 0"><i /><i /><i /></Dots>
    <Field $w={110}>
      <Icon $w={12} $h={11} $ml={12} $stroke="#b8b8b8"><path d="M1 .5 11 10M11 .5 1 10" strokeWidth="1.8" /></Icon>
      <Icon $w={14} $h={11} $ml={24} $stroke="#b8b8b8"><path d="M1 6 5 9.5 13 .8" strokeWidth="2" /></Icon>
      <Fx>f<small>x</small></Fx>
    </Field>
    <Field $w={1183} $ml={3}>
      <Text $size={12.5} $ml={11} $mt={1}>Name</Text>
      <Spring />
      <Icon $w={12} $h={6} $mt={-1} $stroke="#666"><path d="M.8 .8 4 4 7.2 .8" strokeWidth="1.8" /></Icon>
    </Field>
  </FormulaBar>
);

const Sheet = () => (
  <SheetArea>
    <Grid>
      <Corner><Icon $w={38} $h={38}><path d="M38 0V37H1Z" fill="#b4b4b4" stroke="none" /></Icon></Corner>
      {COLS.map((c, i) => (
        <ColHead key={c} $on={i === 0} $last={i === 5}><span>{c}</span></ColHead>
      ))}
      {Array.from({ length: 10 }, (_, r) => (
        <React.Fragment key={r}>
          <RowHead $on={r === 0}>{r + 1}</RowHead>
          {COLS.map((c, i) => (
            <Cell key={c} $bold={r === 0} $last={i === 5} $track={TRACKING[DATA[r]?.[i]]}>
              {DATA[r]?.[i]}
              {i === 1 && r > 0 && r < 4 && <ErrorFlag />}
            </Cell>
          ))}
        </React.Fragment>
      ))}
      <Selection />
    </Grid>
    <VScroll>
      <div>
        <ScrollPiece><Icon $w={8} $h={4}><path d="M0 4H8L4 0Z" fill="#666" stroke="none" /></Icon></ScrollPiece>
        <ScrollPiece $h={247} />
      </div>
      <ScrollPiece><Icon $w={8} $h={4}><path d="M0 0H8L4 4Z" fill="#666" stroke="none" /></Icon></ScrollPiece>
    </VScroll>
  </SheetArea>
);

const Bottom = () => (
  <>
    <TabsBar>
      <TopLine $w={100}>
        <Icon $w={5} $h={8} $ml={26} $mt={8}><path d="M5 0V8L0 4Z" fill="#c3c3c3" stroke="none" /></Icon>
        <Icon $w={5} $h={8} $ml={25} $mt={8}><path d="M0 0V8L5 4Z" fill="#c3c3c3" stroke="none" /></Icon>
      </TopLine>
      <SheetTab><Text $weight={700} $color={GREEN} $size={12.2}>Student List</Text></SheetTab>
      <TopLine $w={1219}>
        <Icon $w={17} $h={17} $ml={33} $mt={4} $stroke="#777">
          <circle cx="8" cy="8.5" r="7.5" /><path d="M4 8.5H12M8 4.5V12.5" strokeWidth="2" />
        </Icon>
        <Spring />
        <Dots $h={10} $m="8px 0 0"><i /><i /><i /></Dots>
        <HScroll>
          <ScrollPiece><Icon $w={4} $h={8}><path d="M4 0V8L0 4Z" fill="#555" stroke="none" /></Icon></ScrollPiece>
          <ScrollPiece $w={316} />
          <Spring />
          <ScrollPiece><Icon $w={4} $h={8}><path d="M0 0V8L4 4Z" fill="#555" stroke="none" /></Icon></ScrollPiece>
        </HScroll>
      </TopLine>
    </TabsBar>
    <StatusBar>
      <Text $size={11} $ml={7} $track={-0.1}>Ready</Text>
      <Spring />
      <Icon $w={15} $h={13}>
        <path d="M5 9.5H.5V.5H13.5V4" />
        <circle cx="9.5" cy="8.5" r="3.3" strokeWidth="1.8" strokeDasharray="1.6 1" /><circle cx="9.5" cy="8.5" r="2" />
      </Icon>
      <StatusLabel><Text $size={11.2}>Display Settings</Text></StatusLabel>
      <ViewButton $on><Icon $w={13} $h={13}><path d="M.5 .5H12.5V12.5H.5ZM4.5 .5V12.5M8.5 .5V12.5M.5 4.5H12.5M.5 8.5H12.5" /></Icon></ViewButton>
      <ViewButton><Icon $w={14} $h={13}><path d="M.5 .5H13.5V12.5H.5ZM3.5 2.5H10.5V10.5H3.5ZM5 4.5H9M5 6.5H9M5 8.5H9" /></Icon></ViewButton>
      <ViewButton><Icon $w={14} $h={13}><path d="M.5 .5H13.5V12.5H.5ZM4.5 .5V7.5M.5 7.5H9.5V.5" /></Icon></ViewButton>
      <Icon $w={131} $h={12} $ml={6} $mt={-1} $stroke="#555">
        <path d="M0 5.5H8M13 6.5H113M63.5 4V9M118 5.5H126M122 1.5V9.5" />
        <path d="M89 1H94V12H89Z" fill="#777" stroke="none" />
      </Icon>
      <ZoomLabel><Text $size={11} $track={-0.3} $mt={-1}>280%</Text></ZoomLabel>
    </StatusBar>
  </>
);

export default function App() {
  return (
    <>
      <Global />
      <Desktop>
        <Window>
          <Title />
          <Tabs />
          <RibbonBar />
          <Formula />
          <Sheet />
          <Bottom />
        </Window>
      </Desktop>
    </>
  );
}
